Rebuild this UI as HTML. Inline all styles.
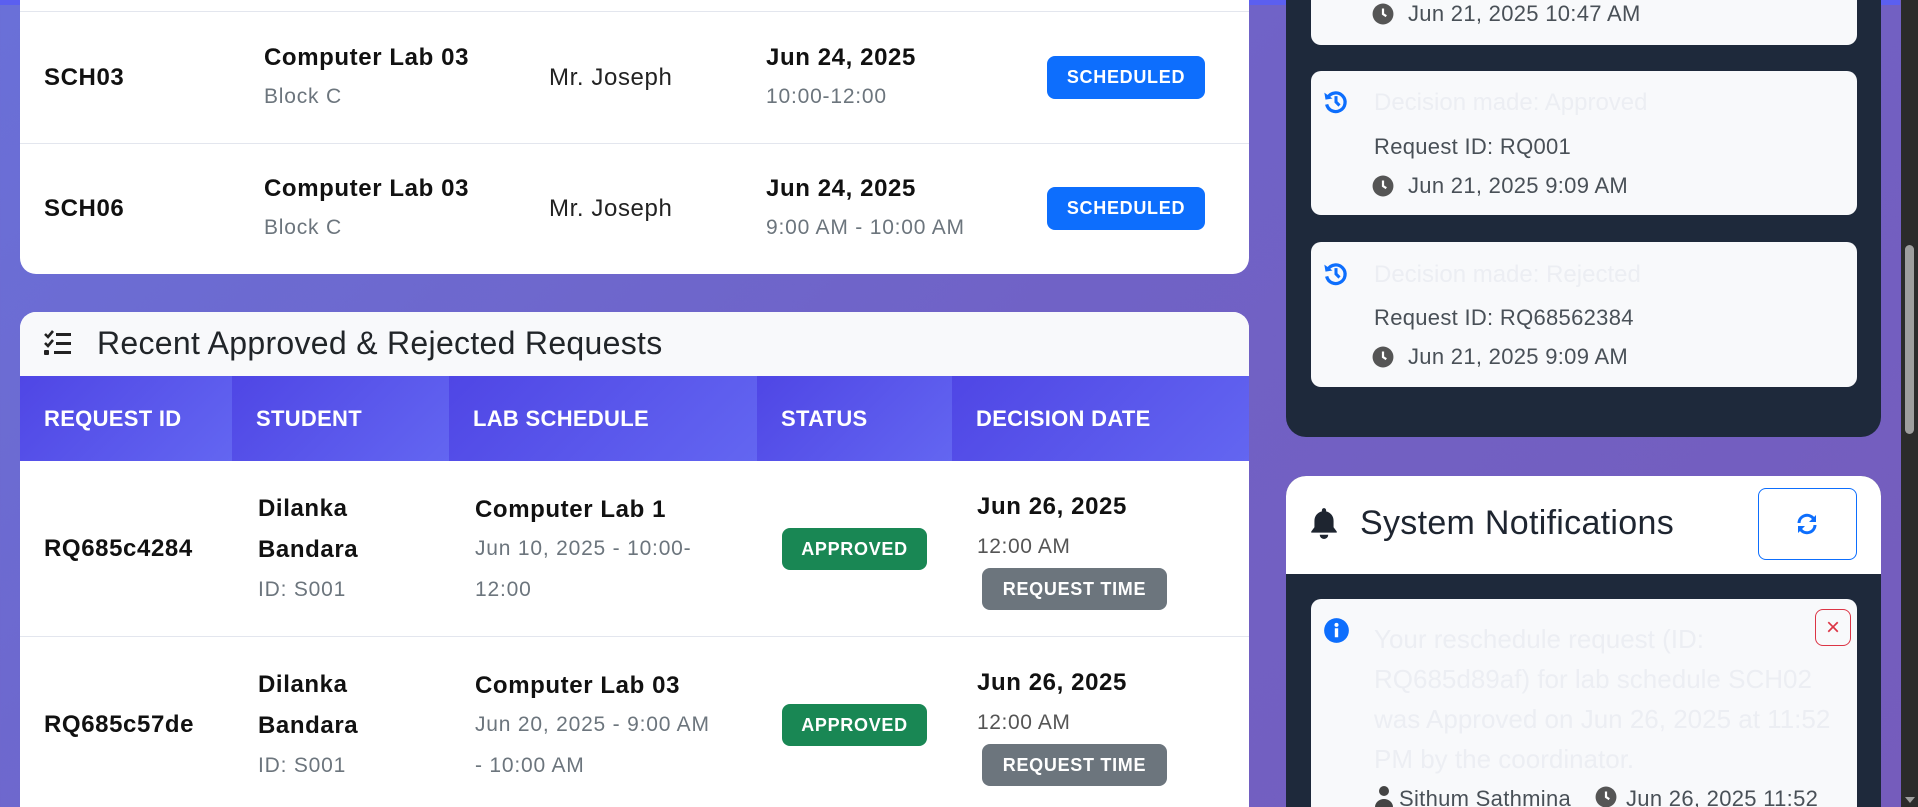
<!DOCTYPE html>
<html><head><meta charset="utf-8"><style>
*{margin:0;padding:0;box-sizing:border-box}
html{width:1918px;height:807px;overflow:hidden}
body{width:1918px;height:807px;overflow:hidden;position:relative;font-family:"Liberation Sans",sans-serif;background:linear-gradient(135deg,#6a70d8 0%,#7062c6 50%,#755cbc 100%)}
.a{position:absolute;white-space:nowrap}
.b{font-weight:bold;color:#111;font-size:24px;letter-spacing:.6px}
.g{color:#6c757d;font-size:21px;letter-spacing:.8px}
.card{position:absolute;background:#fff;border-radius:16px;overflow:hidden}
.badge{position:absolute;color:#fff;font-weight:bold;font-size:18px;border-radius:8px;display:flex;align-items:center;justify-content:center;letter-spacing:.7px}
.th{position:absolute;top:0;height:85px;color:#fff;font-weight:bold;font-size:22px;display:flex;align-items:center;padding-left:24px;letter-spacing:.3px}
.ic{position:absolute;background:#f8f9fb;border-radius:10px}
.lt{color:#eceef3;font-size:24px}
.mt{color:#495057;font-size:22px;letter-spacing:.3px}
</style></head><body>
<div class="a" style="left:0;top:0;width:1900px;height:5px;background:#5b5ff0"></div>

<div class="card" style="left:20px;top:-20px;width:1229px;height:294px;border-radius:0 0 16px 16px">
 <div class="a" style="left:0;top:31px;width:100%;height:1px;background:#e3e6ee"></div>
 <div class="a" style="left:0;top:163px;width:100%;height:1px;background:#e3e6ee"></div>
</div>
<div class="a b" style="left:44px;top:64px">SCH03</div>
<div class="a b" style="left:264px;top:44px">Computer Lab 03</div>
<div class="a g" style="left:264px;top:85px">Block C</div>
<div class="a" style="left:549px;top:64px;font-size:24px;letter-spacing:.6px;color:#222">Mr. Joseph</div>
<div class="a b" style="left:766px;top:44px">Jun 24, 2025</div>
<div class="a g" style="left:766px;top:85px">10:00-12:00</div>
<div class="badge" style="left:1047px;top:56px;width:158px;height:43px;background:#0d6efd">SCHEDULED</div>

<div class="a b" style="left:44px;top:195px">SCH06</div>
<div class="a b" style="left:264px;top:175px">Computer Lab 03</div>
<div class="a g" style="left:264px;top:216px">Block C</div>
<div class="a" style="left:549px;top:195px;font-size:24px;letter-spacing:.6px;color:#222">Mr. Joseph</div>
<div class="a b" style="left:766px;top:175px">Jun 24, 2025</div>
<div class="a g" style="left:766px;top:216px">9:00 AM - 10:00 AM</div>
<div class="badge" style="left:1047px;top:187px;width:158px;height:43px;background:#0d6efd">SCHEDULED</div>

<div class="card" style="left:20px;top:312px;width:1229px;height:520px;border-radius:16px 16px 0 0">
 <div class="a" style="left:0;top:0;width:100%;height:64px;background:#f8f9fb"></div>
 <svg class="a" style="left:23px;top:17px" width="30" height="28" viewBox="0 0 30 28"><path d="M2 5l3 3 5-6M2 14l3 3 5-6" stroke="#222" stroke-width="2.6" fill="none"/><rect x="1" y="21" width="5" height="5" rx="1" fill="#222"/><rect x="13" y="4" width="15" height="3" fill="#222"/><rect x="13" y="13" width="15" height="3" fill="#222"/><rect x="11" y="22" width="17" height="3" fill="#222"/></svg>
 <div class="a" style="left:77px;top:13px;font-size:32px;letter-spacing:.3px;color:#212529">Recent Approved &amp; Rejected Requests</div>
 <div class="a" style="left:0;top:64px;width:100%;height:85px;background:#4f46e5">
  <div class="th" style="left:0;width:212px;background:linear-gradient(135deg,#4f46e5,#6366f1)">REQUEST ID</div>
  <div class="th" style="left:212px;width:217px;background:linear-gradient(135deg,#4f46e5,#6366f1)">STUDENT</div>
  <div class="th" style="left:429px;width:308px;background:linear-gradient(135deg,#4f46e5,#6366f1)">LAB SCHEDULE</div>
  <div class="th" style="left:737px;width:195px;background:linear-gradient(135deg,#4f46e5,#6366f1)">STATUS</div>
  <div class="th" style="left:932px;width:297px;background:linear-gradient(135deg,#4f46e5,#6366f1)">DECISION DATE</div>
 </div>
 <div class="a" style="left:0;top:324px;width:100%;height:1px;background:#e3e6ee"></div>
</div>
<div class="a b" style="left:44px;top:535px">RQ685c4284</div>
<div class="a b" style="left:258px;top:495px">Dilanka</div>
<div class="a b" style="left:258px;top:536px">Bandara</div>
<div class="a g" style="left:258px;top:578px">ID: S001</div>
<div class="a b" style="left:475px;top:496px">Computer Lab 1</div>
<div class="a g" style="left:475px;top:537px">Jun 10, 2025 - 10:00-</div>
<div class="a g" style="left:475px;top:578px">12:00</div>
<div class="badge" style="left:782px;top:528px;width:145px;height:42px;background:#198754">APPROVED</div>
<div class="a b" style="left:977px;top:493px">Jun 26, 2025</div>
<div class="a" style="left:977px;top:535px;font-size:21px;letter-spacing:.6px;color:#555">12:00 AM</div>
<div class="badge" style="left:982px;top:568px;width:185px;height:42px;background:#6c757d">REQUEST TIME</div>

<div class="a b" style="left:44px;top:711px">RQ685c57de</div>
<div class="a b" style="left:258px;top:671px">Dilanka</div>
<div class="a b" style="left:258px;top:712px">Bandara</div>
<div class="a g" style="left:258px;top:754px">ID: S001</div>
<div class="a b" style="left:475px;top:672px">Computer Lab 03</div>
<div class="a g" style="left:475px;top:713px">Jun 20, 2025 - 9:00 AM</div>
<div class="a g" style="left:475px;top:754px">- 10:00 AM</div>
<div class="badge" style="left:782px;top:704px;width:145px;height:42px;background:#198754">APPROVED</div>
<div class="a b" style="left:977px;top:669px">Jun 26, 2025</div>
<div class="a" style="left:977px;top:711px;font-size:21px;letter-spacing:.6px;color:#555">12:00 AM</div>
<div class="badge" style="left:982px;top:744px;width:185px;height:42px;background:#6c757d">REQUEST TIME</div>

<div class="a" style="left:1286px;top:-30px;width:595px;height:467px;background:#1e293b;border-radius:0 0 20px 20px"></div>
<div class="ic" style="left:1311px;top:-20px;width:546px;height:65px"></div>
<svg class="a" style="left:1372px;top:3px" width="22" height="22" viewBox="0 0 20 20"><circle cx="10" cy="10" r="9.5" fill="#555"/><path d="M10 5v5l3 2" stroke="#fff" stroke-width="2" fill="none"/></svg>
<div class="a mt" style="left:1408px;top:1px">Jun 21, 2025 10:47 AM</div>

<div class="ic" style="left:1311px;top:71px;width:546px;height:144px"></div>
<svg class="a" style="left:1322px;top:88px" width="28" height="28" viewBox="0 0 24 24"><path d="M5 8a8 8 0 1 1-1 6" stroke="#0d6efd" stroke-width="2.8" fill="none"/><path d="M2 4l1 6 6-1z" fill="#0d6efd"/><path d="M12 7v5l3 3" stroke="#0d6efd" stroke-width="2.6" fill="none"/></svg>
<div class="a lt" style="left:1374px;top:89px">Decision made: Approved</div>
<div class="a mt" style="left:1374px;top:134px">Request ID: RQ001</div>
<svg class="a" style="left:1372px;top:175px" width="22" height="22" viewBox="0 0 20 20"><circle cx="10" cy="10" r="9.5" fill="#555"/><path d="M10 5v5l3 2" stroke="#fff" stroke-width="2" fill="none"/></svg>
<div class="a mt" style="left:1408px;top:173px">Jun 21, 2025 9:09 AM</div>

<div class="ic" style="left:1311px;top:242px;width:546px;height:145px"></div>
<svg class="a" style="left:1322px;top:260px" width="28" height="28" viewBox="0 0 24 24"><path d="M5 8a8 8 0 1 1-1 6" stroke="#0d6efd" stroke-width="2.8" fill="none"/><path d="M2 4l1 6 6-1z" fill="#0d6efd"/><path d="M12 7v5l3 3" stroke="#0d6efd" stroke-width="2.6" fill="none"/></svg>
<div class="a lt" style="left:1374px;top:261px">Decision made: Rejected</div>
<div class="a mt" style="left:1374px;top:305px">Request ID: RQ68562384</div>
<svg class="a" style="left:1372px;top:346px" width="22" height="22" viewBox="0 0 20 20"><circle cx="10" cy="10" r="9.5" fill="#555"/><path d="M10 5v5l3 2" stroke="#fff" stroke-width="2" fill="none"/></svg>
<div class="a mt" style="left:1408px;top:344px">Jun 21, 2025 9:09 AM</div>

<div class="a" style="left:1286px;top:476px;width:595px;height:360px;background:#1e293b;border-radius:20px 20px 0 0;overflow:hidden">
 <div class="a" style="left:0;top:0;width:100%;height:98px;background:#fff"></div>
</div>
<svg class="a" style="left:1307px;top:506px" width="34" height="34" viewBox="0 0 32 32"><path d="M16 2a2 2 0 0 1 2 2v1a9 9 0 0 1 7 9v6l3 4v1H4v-1l3-4v-6a9 9 0 0 1 7-9V4a2 2 0 0 1 2-2z" fill="#1e2530"/><path d="M12 27a4 4 0 0 0 8 0z" fill="#1e2530"/></svg>
<div class="a" style="left:1360px;top:504px;font-size:34px;letter-spacing:.3px;color:#1e2530">System Notifications</div>
<div class="a" style="left:1758px;top:488px;width:99px;height:72px;border:1.5px solid #0d6efd;border-radius:8px"></div>
<svg class="a" style="left:1795px;top:512px" width="24" height="24" viewBox="0 0 24 24"><path d="M4 11a8 8 0 0 1 14-5l2 2M20 13a8 8 0 0 1-14 5l-2-2" stroke="#0d6efd" stroke-width="3" fill="none"/><path d="M21 3v7h-7zM3 21v-7h7z" fill="#0d6efd"/></svg>
<div class="ic" style="left:1311px;top:599px;width:546px;height:230px"></div>
<svg class="a" style="left:1323px;top:617px" width="27" height="27" viewBox="0 0 24 24"><circle cx="12" cy="12" r="11" fill="#0d6efd"/><rect x="10.5" y="10" width="3" height="8" fill="#fff"/><circle cx="12" cy="7" r="1.8" fill="#fff"/></svg>
<div class="a" style="left:1815px;top:609px;width:36px;height:37px;border:1.5px solid #dc3545;border-radius:8px;color:#dc3545;font-size:24px;display:flex;align-items:center;justify-content:center">×</div>
<div class="a lt" style="left:1374px;top:619px;line-height:40px;font-size:26px">Your reschedule request (ID:<br>RQ685d89af) for lab schedule SCH02<br>was Approved on Jun 26, 2025 at 11:52<br>PM by the coordinator.</div>
<svg class="a" style="left:1374px;top:785px" width="20" height="22" viewBox="0 0 20 22"><circle cx="10" cy="6" r="5" fill="#444"/><path d="M1 22a9 8 0 0 1 18 0z" fill="#444"/></svg>
<div class="a mt" style="left:1399px;top:786px">Sithum Sathmina</div>
<svg class="a" style="left:1595px;top:786px" width="22" height="22" viewBox="0 0 20 20"><circle cx="10" cy="10" r="9.5" fill="#555"/><path d="M10 5v5l3 2" stroke="#fff" stroke-width="2" fill="none"/></svg>
<div class="a mt" style="left:1626px;top:786px">Jun 26, 2025 11:52</div>

<div class="a" style="left:1901px;top:0;width:17px;height:807px;background:#2b2b2b"></div>
<div class="a" style="left:1905px;top:245px;width:9px;height:189px;background:#9e9e9e;border-radius:5px"></div>
<div class="a" style="left:1905px;top:797px;width:0;height:0;border-left:5px solid transparent;border-right:5px solid transparent;border-top:6px solid #9e9e9e"></div>
</body></html>
